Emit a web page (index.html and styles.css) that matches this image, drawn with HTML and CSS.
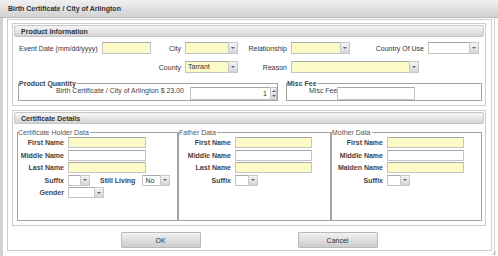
FILE: index.html
```html
<!DOCTYPE html>
<html>
<head>
  <meta charset="utf-8">
  <title>Birth Certificate / City of Arlington</title>
  <link rel="stylesheet" href="styles.css">
</head>
<body>
  <div class="dialog">
    <div class="titlebar">Birth Certificate / City of Arlington</div>

    <div class="frame">
      <div class="content">

        <div class="panel">
          <div class="panel-head">Product Information</div>

          <div class="info-grid">
            <label class="lbl lbl-first">Event Date (mm/dd/yyyy)</label>
            <input class="field req" type="text">
            <label class="lbl">City</label>
            <div class="combo"><span class="combo-field req"></span><span class="combo-btn"></span></div>
            <label class="lbl">Relationship</label>
            <div class="combo"><span class="combo-field req"></span><span class="combo-btn"></span></div>
            <label class="lbl">Country Of Use</label>
            <div class="combo"><span class="combo-field"></span><span class="combo-btn"></span></div>

            <label class="lbl col-3">County</label>
            <div class="combo"><span class="combo-field req">Tarrant</span><span class="combo-btn"></span></div>
            <label class="lbl">Reason</label>
            <div class="combo combo-reason"><span class="combo-field req"></span><span class="combo-btn"></span></div>
          </div>

          <div class="qty-row">
            <fieldset class="group qty">
              <legend>Product Quantity</legend>
              <div class="qty-body">
                <span class="qty-label">Birth Certificate / City of Arlington $ 23.00</span>
                <div class="spin">
                  <span class="spin-field">1</span>
                  <span class="spin-btns"><span class="arrow-up"></span><span class="arrow-down"></span></span>
                </div>
              </div>
            </fieldset>

            <fieldset class="group misc">
              <legend>Misc Fee</legend>
              <div class="misc-body">
                <span class="misc-label">Misc Fee</span>
                <input class="field misc-field" type="text">
              </div>
            </fieldset>
          </div>
        </div>

        <div class="panel details">
          <div class="panel-head">Certificate Details</div>

          <div class="people">
            <fieldset class="group person holder">
              <legend>Certificate Holder Data</legend>
              <div class="person-grid">
                <label>First Name</label>
                <input class="field req name" type="text">
                <label>Middle Name</label>
                <input class="field name" type="text">
                <label>Last Name</label>
                <input class="field req name" type="text">
                <label>Suffix</label>
                <div class="inline">
                  <div class="combo combo-suffix"><span class="combo-field"></span><span class="combo-btn"></span></div>
                  <label class="still">Still Living</label>
                  <div class="combo combo-living"><span class="combo-field">No</span><span class="combo-btn"></span></div>
                </div>
                <label>Gender</label>
                <div class="combo combo-gender"><span class="combo-field"></span><span class="combo-btn"></span></div>
              </div>
            </fieldset>

            <fieldset class="group person father">
              <legend>Father Data</legend>
              <div class="person-grid">
                <label>First Name</label>
                <input class="field req name" type="text">
                <label>Middle Name</label>
                <input class="field name" type="text">
                <label>Last Name</label>
                <input class="field req name" type="text">
                <label>Suffix</label>
                <div class="combo combo-suffix"><span class="combo-field"></span><span class="combo-btn"></span></div>
              </div>
            </fieldset>

            <fieldset class="group person mother">
              <legend>Mother Data</legend>
              <div class="person-grid">
                <label>First Name</label>
                <input class="field req name" type="text">
                <label>Middle Name</label>
                <input class="field name" type="text">
                <label>Maiden Name</label>
                <input class="field req name" type="text">
                <label>Suffix</label>
                <div class="combo combo-suffix"><span class="combo-field"></span><span class="combo-btn"></span></div>
              </div>
            </fieldset>
          </div>
        </div>

        <div class="actions">
          <button class="btn">OK</button>
          <button class="btn">Cancel</button>
        </div>

      </div>
    </div>

    <svg class="grip" width="5" height="5" viewBox="0 0 5 5">
      <line x1="5" y1="1" x2="1" y2="5" stroke="#b0b0b0" stroke-width="0.8"></line>
      <line x1="5" y1="3" x2="3" y2="5" stroke="#b0b0b0" stroke-width="0.8"></line>
    </svg>
  </div>
</body>
</html>
```

FILE: styles.css
```css
* {
  margin: 0;
  padding: 0;
  box-sizing: border-box;
}

body {
  font-family: 'Liberation Sans', Arial, sans-serif;
  font-size: 7px;
  color: #333;
  background: #fff;
  width: 498px;
  height: 256px;
  overflow: hidden;
}

.dialog {
  position: relative;
  height: 256px;
  display: flex;
  flex-direction: column;
}

.titlebar {
  height: 18px;
  line-height: 17px;
  padding-left: 8px;
  font-weight: bold;
  color: #333;
  background: linear-gradient(#f1f1f1, #d2d2d2);
  border-bottom: 1px solid #b7b7b7;
}

.frame {
  flex: 1;
  display: flex;
  border-left: 3px solid #cfd3d7;
  border-right: 1px solid #d2d2d2;
  margin-right: 3px;
  padding: 1px 2px 5px 4px;
}

.content {
  flex: 1;
  display: flex;
  flex-direction: column;
  border: 1px solid #cdcdcd;
  padding: 3px 5px 0 4px;
}

.panel {
  border: 1px solid #cdcdcd;
  padding: 1px;
}

.panel.details {
  margin-top: 4px;
}

.panel-head {
  height: 12px;
  line-height: 11px;
  padding-left: 6px;
  font-weight: bold;
  color: #333;
  border: 1px solid #c6c6c6;
  border-radius: 2px;
  background: linear-gradient(#f6f6f6, #d4d4d4);
}

/* inputs */

.field {
  display: block;
  height: 12px;
  border: 1px solid #c4c4c4;
  border-top-color: #a8a8a8;
  background: #fff;
  font: inherit;
  padding: 0 2px;
  outline: none;
}

.req {
  background: #fcfac7;
}

.combo {
  display: flex;
  height: 12px;
}

.combo-field {
  flex: 1;
  border: 1px solid #c4c4c4;
  border-top-color: #a8a8a8;
  border-right: none;
  padding-left: 2px;
  line-height: 9px;
  background-color: #fff;
}

.combo-field.req {
  background: #fcfac7;
}

.combo-btn {
  width: 10px;
  display: flex;
  align-items: center;
  justify-content: center;
  border: 1px solid #c8c8c8;
  background: linear-gradient(#f5f5f5, #d6d6d6);
}

.combo-btn::after {
  content: '';
  border-left: 2px solid transparent;
  border-right: 2px solid transparent;
  border-top: 2px solid #51698a;
}

/* product information */

.info-grid {
  display: grid;
  grid-template-columns: 83px 49px 34px 53px 53px 59px 78px 51px;
  grid-template-rows: 12px 12px;
  row-gap: 7px;
  align-items: center;
  margin: 5px 0 0 5px;
}

.lbl {
  text-align: right;
  padding-right: 4px;
  white-space: nowrap;
}

.lbl-first {
  text-align: left;
}

.col-3 {
  grid-column: 3;
}

.combo-reason {
  grid-column: 6 / 9;
  width: 128px;
}

.qty-row {
  display: flex;
  margin: 7px 0 3px 4px;
}

fieldset.group {
  border: 1px solid #a3a3a3;
  padding: 0;
  min-width: 0;
}

fieldset.group legend {
  padding: 0 1px 0 0;
  line-height: 7px;
  font-weight: bold;
  color: #444;
}

.qty {
  width: 260px;
}

.qty-body {
  display: flex;
  justify-content: flex-end;
  align-items: flex-start;
  gap: 6px;
}

.qty-label {
  line-height: 7px;
  color: #444;
}

.spin {
  display: flex;
  height: 13px;
}

.spin-field {
  width: 80px;
  border: 1px solid #c4c4c4;
  border-top-color: #a8a8a8;
  border-right: none;
  text-align: right;
  padding-right: 3px;
  line-height: 11px;
}

.spin-btns {
  width: 7px;
  display: flex;
  flex-direction: column;
  align-items: center;
  justify-content: space-evenly;
  border: 1px solid #c4c4c4;
  background: linear-gradient(#f5f5f5, #d6d6d6);
}

.arrow-up {
  border-left: 2px solid transparent;
  border-right: 2px solid transparent;
  border-bottom: 2px solid #51698a;
}

.arrow-down {
  border-left: 2px solid transparent;
  border-right: 2px solid transparent;
  border-top: 2px solid #51698a;
}

.misc {
  width: 196px;
  margin-left: 8px;
}

.misc-body {
  display: flex;
  align-items: flex-start;
  padding-left: 22px;
}

.misc-label {
  line-height: 8px;
  color: #444;
}

.misc-field {
  width: 78px;
  height: 13px;
}

/* certificate details */

.people {
  display: grid;
  grid-template-columns: 161px 153px 151px;
  margin: 5px 0 3px 3px;
}

.person legend {
  font-weight: normal !important;
  color: #555 !important;
}

.person-grid {
  display: grid;
  grid-template-columns: 46px auto;
  grid-auto-rows: 11px;
  row-gap: 1.5px;
  column-gap: 4px;
  align-items: center;
  justify-items: start;
  padding: 1px 0 22px 0;
}

.father .person-grid {
  grid-template-columns: 52px auto;
}

.mother .person-grid {
  grid-template-columns: 51px auto;
}

.person-grid > label {
  justify-self: end;
  font-weight: bold;
  color: #444;
  white-space: nowrap;
}

.person-grid .name {
  width: 77px;
  height: 11px;
}

.holder .person-grid .name {
  width: 78px;
}

.person-grid .combo {
  height: 11px;
}

.combo-suffix {
  width: 23px;
}

.holder .combo-suffix {
  width: 22px;
}

.combo-gender {
  width: 36px;
}

.inline {
  display: flex;
  align-items: center;
}

.still {
  margin-left: 10px;
  font-weight: bold;
  color: #444;
}

.combo-living {
  width: 28px;
  margin-left: 7px;
}

/* buttons */

.actions {
  display: flex;
  justify-content: center;
  gap: 97px;
  margin-top: 6px;
}

.btn {
  width: 80px;
  height: 16px;
  font: inherit;
  color: #333;
  border: 1px solid #b9b9b9;
  border-radius: 1px;
  background: linear-gradient(#f2f2f2, #cbcbcb);
  cursor: pointer;
}

.grip {
  position: absolute;
  right: 2px;
  bottom: 1px;
}
```
